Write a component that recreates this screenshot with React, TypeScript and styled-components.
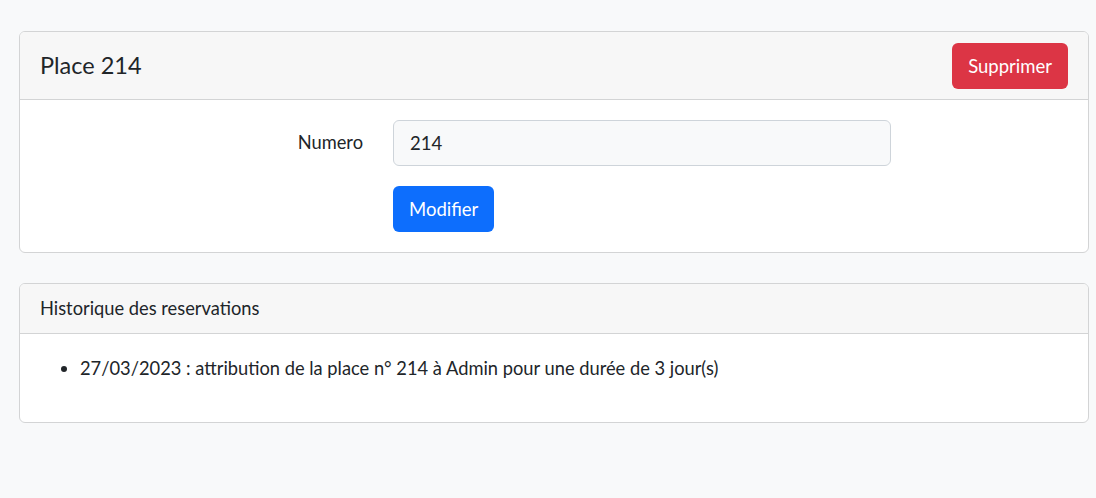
import React from 'react';
import styled, { createGlobalStyle } from 'styled-components';

const GlobalStyle = createGlobalStyle`
  * { box-sizing: border-box; }
  body {
    margin: 0;
    background: #f8f9fa;
    color: #212529;
    font-family: Lato, "Noto Sans", sans-serif;
    font-size: 18.3px;
    line-height: 1.5;
  }
`;

const Page = styled.div`
  display: flex;
  flex-direction: column;
  gap: 30px;
  padding: 31px 7px 0 19px;
`;

const Card = styled.section`
  background: #fff;
  border: 1px solid #d3d4d5;
  border-radius: 6px;
  overflow: hidden;
`;

const CardHeader = styled.header<{ $tall?: boolean }>`
  display: flex;
  align-items: center;
  justify-content: space-between;
  height: ${p => (p.$tall ? '68px' : '50px')};
  padding: 0 20px;
  background: #f7f7f7;
  border-bottom: 1px solid #d3d4d5;
`;

const Title = styled.h4`
  margin: 0;
  font-size: 23.5px;
  font-weight: 400;
  line-height: 1.2;
`;

const HeaderText = styled.span`
  font-size: 18.3px;
`;

const Button = styled.button<{ $variant: 'danger' | 'primary' }>`
  height: 46px;
  padding: 0 16px;
  border: none;
  border-radius: 6px;
  background: ${p => (p.$variant === 'danger' ? '#dc3545' : '#0d6efd')};
  color: #fff;
  font-family: inherit;
  font-size: 18.5px;
  cursor: pointer;
`;

const FormBody = styled.div`
  display: grid;
  grid-template-columns: 323px 498px;
  column-gap: 30px;
  row-gap: 20px;
  align-items: center;
  padding: 20px;
`;

const Label = styled.label`
  text-align: right;
`;

const Input = styled.input`
  height: 46px;
  padding: 0 16px;
  border: 1px solid #ced4da;
  border-radius: 6px;
  background: #f8f9fa;
  color: #212529;
  font-family: inherit;
  font-size: 18.5px;
`;

const Actions = styled.div`
  grid-column: 2;
`;

const ListBody = styled.div`
  padding: 21px 20px 20px;
`;

const List = styled.ul`
  margin: 0 0 20px;
  padding-left: 40px;
`;

export default function App() {
  return (
    <>
      <GlobalStyle />
      <Page>
        <Card>
          <CardHeader $tall>
            <Title>Place 214</Title>
            <Button $variant="danger">Supprimer</Button>
          </CardHeader>
          <FormBody>
            <Label htmlFor="numero">Numero</Label>
            <Input id="numero" defaultValue="214" />
            <Actions>
              <Button $variant="primary">Modifier</Button>
            </Actions>
          </FormBody>
        </Card>
        <Card>
          <CardHeader>
            <HeaderText>Historique des reservations</HeaderText>
          </CardHeader>
          <ListBody>
            <List>
              <li>27/03/2023 : attribution de la place n° 214 à Admin pour une durée de 3 jour(s)</li>
            </List>
          </ListBody>
        </Card>
      </Page>
    </>
  );
}
